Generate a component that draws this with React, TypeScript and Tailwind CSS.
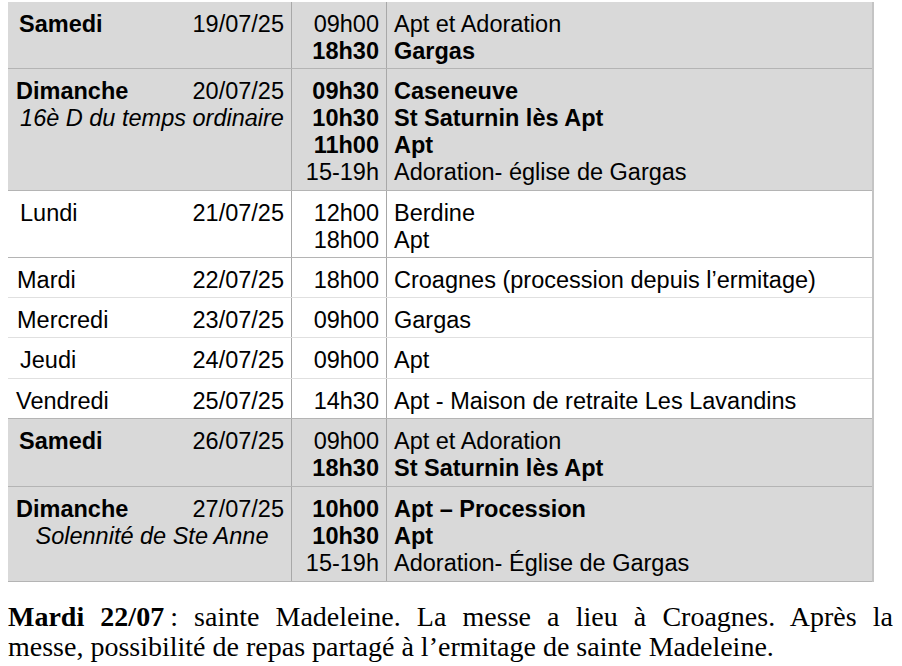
type Line = { time: string; place: string; bold?: boolean };

type Row = {
  day: string;
  date: string;
  sub?: string;
  shaded?: boolean;
  lines: Line[];
  border: "dark" | "light";
  indent: string;
  pb: string;
};

const ROWS: Row[] = [
  {
    day: "Samedi",
    date: "19/07/25",
    shaded: true,
    border: "dark",
    indent: "pl-[11px]",
    pb: "pb-[3px]",
    lines: [
      { time: "09h00", place: "Apt et Adoration" },
      { time: "18h30", place: "Gargas", bold: true },
    ],
  },
  {
    day: "Dimanche",
    date: "20/07/25",
    sub: "16è D du temps ordinaire",
    shaded: true,
    border: "dark",
    indent: "pl-[8px]",
    pb: "pb-[4px]",
    lines: [
      { time: "09h30", place: "Caseneuve", bold: true },
      { time: "10h30", place: "St Saturnin lès Apt", bold: true },
      { time: "11h00", place: "Apt", bold: true },
      { time: "15-19h", place: "Adoration- église de Gargas" },
    ],
  },
  {
    day: "Lundi",
    date: "21/07/25",
    border: "dark",
    indent: "pl-[12px]",
    pb: "pb-[3px]",
    lines: [
      { time: "12h00", place: "Berdine" },
      { time: "18h00", place: "Apt" },
    ],
  },
  {
    day: "Mardi",
    date: "22/07/25",
    border: "light",
    indent: "pl-[9px]",
    pb: "pb-[3px]",
    lines: [{ time: "18h00", place: "Croagnes (procession depuis l’ermitage)" }],
  },
  {
    day: "Mercredi",
    date: "23/07/25",
    border: "light",
    indent: "pl-[9px]",
    pb: "pb-[3px]",
    lines: [{ time: "09h00", place: "Gargas" }],
  },
  {
    day: "Jeudi",
    date: "24/07/25",
    border: "light",
    indent: "pl-[12px]",
    pb: "pb-[4px]",
    lines: [{ time: "09h00", place: "Apt" }],
  },
  {
    day: "Vendredi",
    date: "25/07/25",
    border: "dark",
    indent: "pl-[8px]",
    pb: "pb-[3px]",
    lines: [{ time: "14h30", place: "Apt - Maison de retraite Les Lavandins" }],
  },
  {
    day: "Samedi",
    date: "26/07/25",
    shaded: true,
    border: "dark",
    indent: "pl-[11px]",
    pb: "pb-[4px]",
    lines: [
      { time: "09h00", place: "Apt et Adoration" },
      { time: "18h30", place: "St Saturnin lès Apt", bold: true },
    ],
  },
  {
    day: "Dimanche",
    date: "27/07/25",
    sub: "Solennité de Ste Anne",
    shaded: true,
    border: "dark",
    indent: "pl-[8px]",
    pb: "pb-[4px]",
    lines: [
      { time: "10h00", place: "Apt – Procession", bold: true },
      { time: "10h30", place: "Apt", bold: true },
      { time: "15-19h", place: "Adoration- Église de Gargas" },
    ],
  },
];

function ScheduleRow({ row }: { row: Row }) {
  const bg = row.shaded ? "bg-[#d9d9d9]" : "bg-white";
  const line = row.border === "dark" ? "border-[#b4b4b4]" : "border-[#e0e0e0]";
  return (
    <div className={`grid grid-cols-[284px_95px_1fr] border-b ${line} ${bg}`}>
      {/* day + date */}
      <div className={`border-r border-[#a8a8a8] pt-[9px] pr-[7px] ${row.pb} ${row.indent}`}>
        <div className="flex justify-between">
          <span className={row.shaded ? "font-bold" : ""}>{row.day}</span>
          <span>{row.date}</span>
        </div>
        {row.sub && <div className="italic text-center pl-[4px]">{row.sub}</div>}
      </div>
      {/* times */}
      <div className={`border-r border-[#a8a8a8] pt-[9px] pr-[7px] text-right ${row.pb}`}>
        {row.lines.map((l, i) => (
          <div key={i} className={l.bold ? "font-bold" : ""}>
            {l.time}
          </div>
        ))}
      </div>
      {/* places */}
      <div className={`pt-[9px] pl-[7px] ${row.pb}`}>
        {row.lines.map((l, i) => (
          <div key={i} className={`whitespace-nowrap ${l.bold ? "font-bold" : ""}`}>
            {l.place}
          </div>
        ))}
      </div>
    </div>
  );
}

export default function App() {
  return (
    <div className="w-[902px] h-[666px] bg-white overflow-hidden text-black">
      <div className="ml-[8px] mt-[2px] w-[866px] border-r-2 border-[#c4c4c4] font-['Liberation_Sans',Arial,sans-serif] text-[23.5px] leading-[27px]">
        {ROWS.map((r, i) => (
          <ScheduleRow key={i} row={r} />
        ))}
      </div>
      <div className="ml-[8px] mt-[20px] w-[885px] font-['Liberation_Serif','Times_New_Roman',serif] text-[28px] leading-[30px]">
        <p className="text-justify [text-align-last:justify]">
          <span className="font-bold">Mardi 22/07</span>
          <span className="ml-[6px]">:</span> sainte Madeleine. La messe a lieu à Croagnes. Après la
        </p>
        <p>messe, possibilité de repas partagé à l’ermitage de sainte Madeleine.</p>
      </div>
    </div>
  );
}
